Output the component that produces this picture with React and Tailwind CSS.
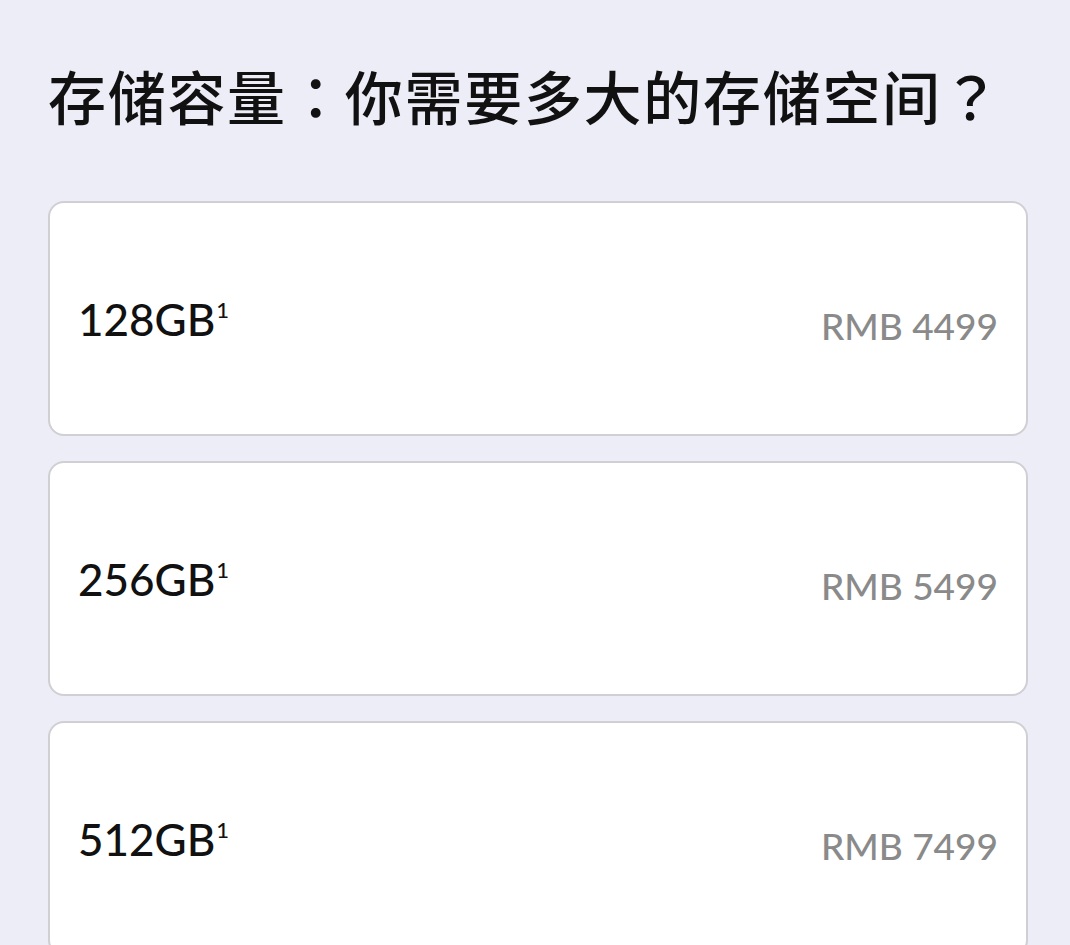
const options = [
  { size: '128GB', price: 'RMB 4499' },
  { size: '256GB', price: 'RMB 5499' },
  { size: '512GB', price: 'RMB 7499' },
]

function Punct({ children }) {
  return (
    <span
      className="inline-block w-[58px] text-center"
      style={{ fontFamily: '"Noto Sans CJK TC", "Noto Sans CJK SC", sans-serif' }}
    >
      {children}
    </span>
  )
}

export default function App() {
  return (
    <div className="h-[945px] w-[1070px] overflow-hidden bg-[#ededf7] px-[48px] pt-[64px]">
      <h1
        className="whitespace-nowrap text-[58px] leading-[62px] font-medium tracking-[1.7px] text-[#111]"
        style={{ fontFamily: '"Noto Sans CJK SC", sans-serif' }}
      >
        存储容量<Punct>：</Punct>你需要多大的存储空间<Punct>？</Punct>
      </h1>

      <div className="mt-[75px] flex w-[980px] flex-col gap-[25px]">
        {options.map((opt) => (
          <div
            key={opt.size}
            className="flex h-[235px] shrink-0 items-center justify-between rounded-[16px] border-2 border-[#cfcfd4] bg-white px-[28px]"
            style={{ fontFamily: 'Lato, "Noto Sans", sans-serif' }}
          >
            <span className="flex items-start text-[44px] font-medium leading-none text-[#111]">
              {opt.size}
              <span className="ml-[1px] mt-[2px] text-[22px] leading-none">1</span>
            </span>
            <span className="mt-[14px] text-[37px] font-medium leading-none text-[#8a8a8a]">{opt.price}</span>
          </div>
        ))}
      </div>
    </div>
  )
}
